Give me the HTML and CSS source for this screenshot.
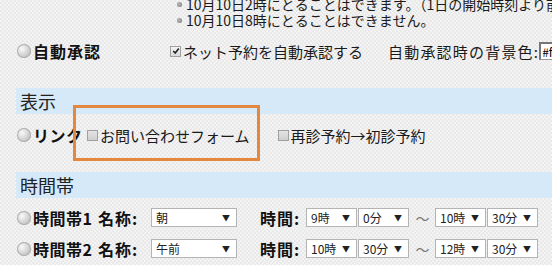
FILE: index.html
```html
<!DOCTYPE html>
<html lang="ja">
<head>
    <meta charset="UTF-8">
    <title>予約設定</title>
    <link rel="stylesheet" href="styles.css">
</head>
<body>
    <div class="page">
        <!-- 注意書き -->
        <ul class="notes">
            <li>10月10日2時にとることはできます。（1日の開始時刻より前</li>
            <li>10月10日8時にとることはできません。</li>
        </ul>

        <!-- 自動承認 -->
        <div class="row">
            <span class="row-label label-auto"><span class="radio"></span>自動承認</span>
            <span class="check checked"><svg viewBox="0 0 10 10" width="8" height="8"><path d="M1.5 5 L4 7.5 L8.5 2" fill="none" stroke="#222" stroke-width="2"/></svg></span>
            <span class="text auto-text">ネット予約を自動承認する</span>
            <span class="text bg-label">自動承認時の背景色:</span>
            <input class="color-input" type="text" value="#ffffff">
        </div>

        <!-- 表示 -->
        <div class="section">表示</div>
        <div class="row">
            <span class="row-label label-link"><span class="radio"></span>リンク</span>
            <span class="check"></span>
            <span class="text">お問い合わせフォーム</span>
            <span class="check second"></span>
            <span class="text">再診予約→初診予約</span>
        </div>

        <!-- 時間帯 -->
        <div class="section">時間帯</div>
        <div class="row time-row">
            <span class="row-label label-time"><span class="radio"></span>時間帯1</span>
            <span class="field">名称:</span>
            <span class="select name-select">朝<i>▼</i></span>
            <span class="field time-field">時間:</span>
            <span class="select time-select">9時<i>▼</i></span>
            <span class="select time-select">0分<i>▼</i></span>
            <span class="tilde">～</span>
            <span class="select time-select">10時<i>▼</i></span>
            <span class="select time-select">30分<i>▼</i></span>
        </div>
        <div class="row time-row">
            <span class="row-label label-time"><span class="radio"></span>時間帯2</span>
            <span class="field">名称:</span>
            <span class="select name-select">午前<i>▼</i></span>
            <span class="field time-field">時間:</span>
            <span class="select time-select">10時<i>▼</i></span>
            <span class="select time-select">30分<i>▼</i></span>
            <span class="tilde">～</span>
            <span class="select time-select">12時<i>▼</i></span>
            <span class="select time-select">30分<i>▼</i></span>
        </div>

        <!-- 強調枠 -->
        <div class="highlight"></div>
    </div>
</body>
</html>
```

FILE: styles.css
```css
/* 色 */
:root {
    --band-bg: #d6e9f8;
    --text-color: #1a1a1a;
    --orange: #e4883f;
}

body {
    margin: 0;
    overflow: hidden;
    font-family: "Noto Sans CJK JP", "Noto Sans", sans-serif;
    color: var(--text-color);
    background-color: #efefef;
    background-image: repeating-conic-gradient(#e9e9e9 0 25%, #f3f3f3 0 50%);
    background-size: 4px 4px;
}

.page {
    position: relative;
    width: 552px;
    height: 265px;
    overflow: hidden;
    white-space: nowrap;
}

/* 注意書き */
.notes {
    list-style: none;
    margin: -4px 0 0 0;
    padding-left: 177px;
    font-size: 14px;
    line-height: 16px;
}

.notes li {
    display: flex;
    align-items: center;
}

.notes li::before {
    content: "";
    width: 5px;
    height: 5px;
    border-radius: 50%;
    background: radial-gradient(circle at 40% 40%, #bbb, #777);
    margin-right: 4px;
    flex-shrink: 0;
}

/* 行 */
.row {
    display: flex;
    align-items: center;
    height: 30px;
    margin-top: 8px;
    padding-left: 17px;
    font-size: 15px;
}

.row > * {
    flex-shrink: 0;
}

.row-label {
    display: flex;
    align-items: center;
    font-weight: bold;
    font-size: 16px;
    letter-spacing: 0.5px;
    color: #111;
}

.label-auto { width: 153px; letter-spacing: 1px; }
.label-link { width: 70px; }
.label-time { width: 81px; }

.radio {
    width: 14px;
    height: 14px;
    border-radius: 50%;
    margin-right: 2px;
    background: radial-gradient(circle at 35% 35%, #fafafa, #c4c4c4 70%, #a8a8a8);
    box-shadow: inset 0 0 0 1px #b0b0b0;
}

.check {
    display: inline-flex;
    align-items: center;
    justify-content: center;
    width: 9px;
    height: 9px;
    border: 1px solid #a0a0a0;
    background: linear-gradient(#e4e4e4, #cfcfcf);
    margin-right: 2px;
}

.check.checked {
    background: linear-gradient(#f4f4f4, #dadada);
}

.check.second {
    margin-left: 28px;
}

.bg-label {
    margin-left: 25px;
    letter-spacing: 1.2px;
}

.color-input {
    margin-left: 0;
    width: 40px;
    height: 18px;
    box-sizing: border-box;
    border: 1px solid #999;
    border-left: 2px solid #777;
    border-top: 2px solid #777;
    padding: 0 1px;
    font-size: 12px;
    font-family: inherit;
    background: #fff;
}

/* 見出し帯 */
.section {
    margin: 20px 0 0 16px;
    height: 26px;
    line-height: 26px;
    padding-left: 4px;
    background: var(--band-bg);
    font-size: 18px;
    color: #222;
}

.section + .row {
    margin-top: 6px;
}

.row + .section {
    margin-top: 22px;
}

/* 時間帯 */
.time-row {
    height: 31px;
}

.section + .time-row {
    margin-top: 4px;
}

.time-row + .time-row {
    margin-top: 0;
}

.field {
    font-weight: bold;
    font-size: 16px;
    letter-spacing: 1px;
    color: #111;
    width: 53px;
}

.time-field {
    margin-left: 22px;
    width: 46px;
}

.select {
    position: relative;
    box-sizing: border-box;
    height: 19px;
    line-height: 17px;
    border: 1px solid #b4b4b4;
    background: #fff;
    font-size: 12px;
    padding-left: 4px;
    margin-right: 1px;
    color: #222;
}

.select i {
    position: absolute;
    right: 6px;
    top: 0;
    font-style: normal;
    font-size: 8px;
    color: #222;
}

.name-select { width: 86px; }
.time-select { width: 51px; }

.tilde {
    width: 25px;
    text-align: center;
    font-size: 14px;
    color: #777;
}

/* 強調枠 */
.highlight {
    position: absolute;
    left: 73px;
    top: 105px;
    width: 181px;
    height: 50px;
    border: 3px solid var(--orange);
}
```
